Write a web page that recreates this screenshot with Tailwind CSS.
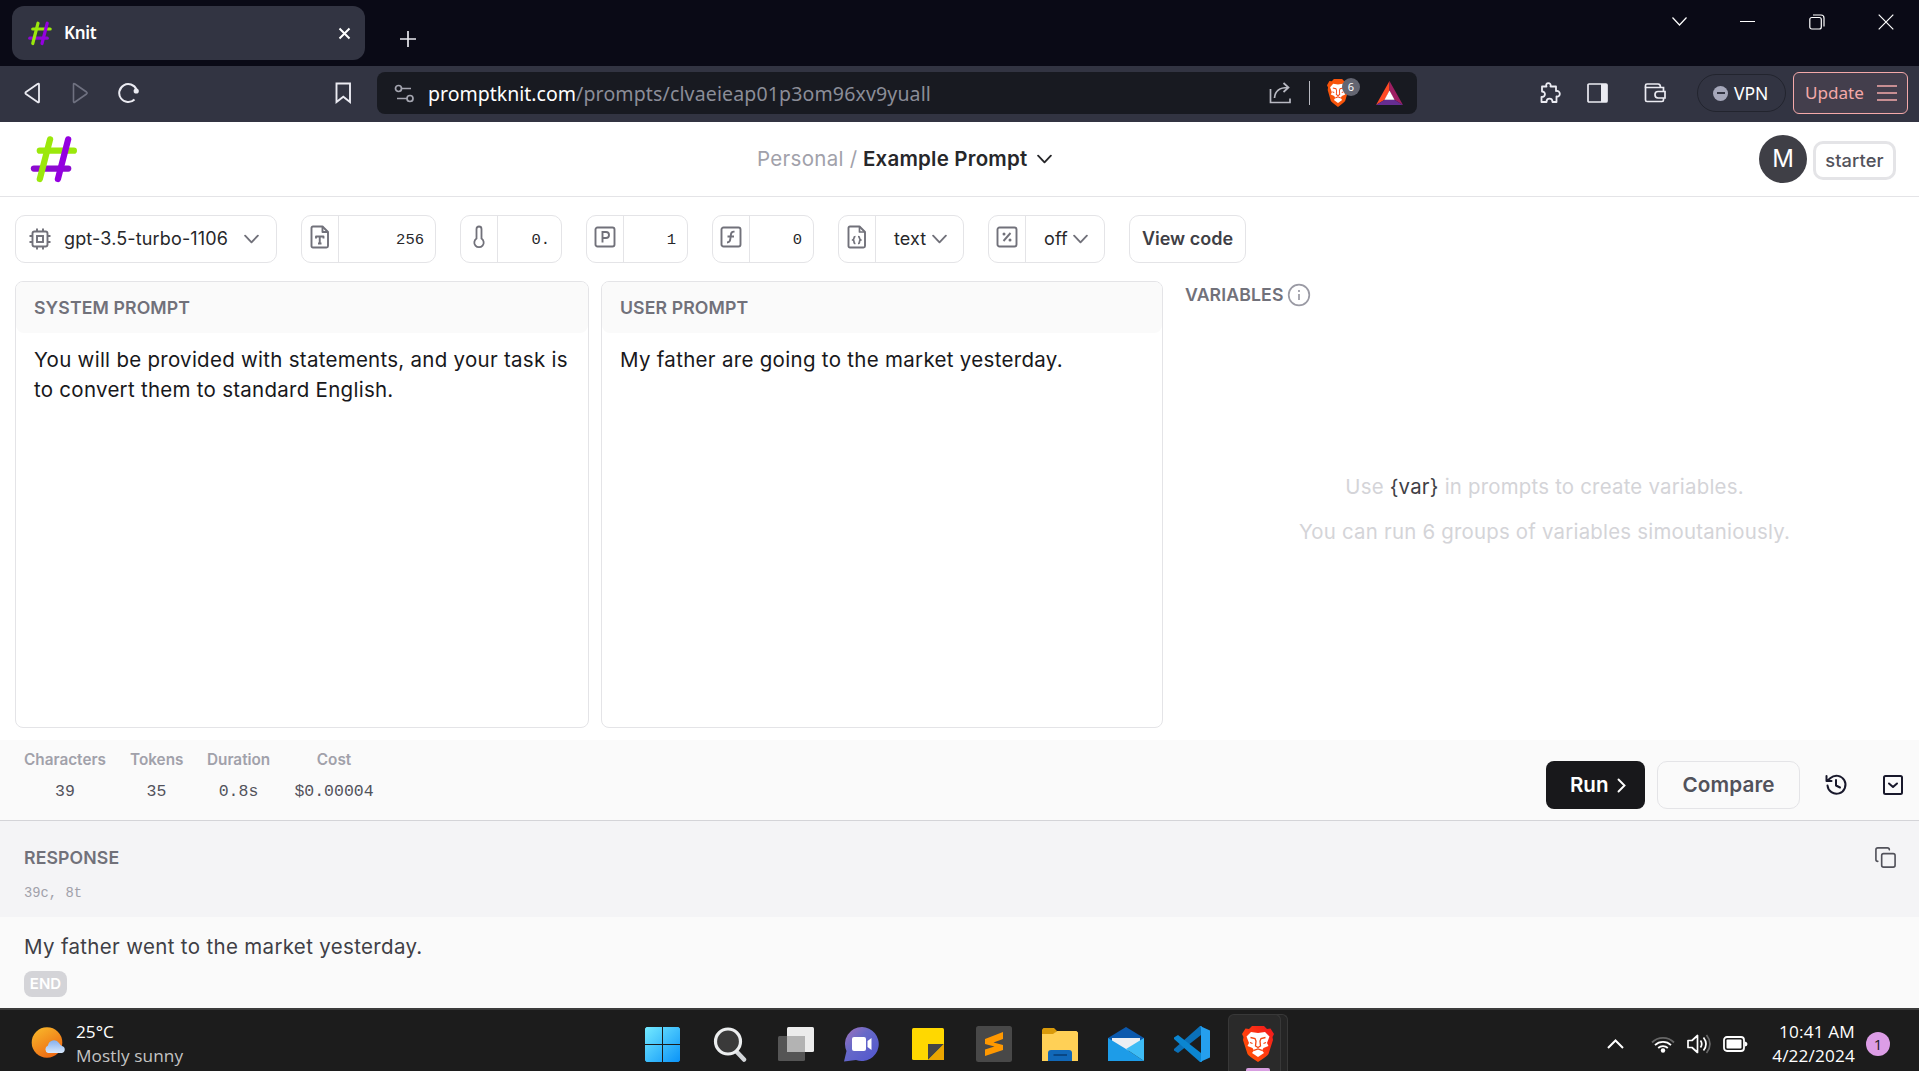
<!DOCTYPE html>
<html lang="en">
<head>
<meta charset="utf-8">
<title>Knit</title>
<script src="https://cdn.jsdelivr.net/npm/@tailwindcss/browser@4"></script>
</head>
<body class="w-[1919px] h-[1071px] overflow-hidden flex flex-col bg-white font-['Inter',sans-serif] text-[20px] text-[#18181b] whitespace-nowrap">
<svg class="hidden">
  <defs>
    <symbol id="knit" viewBox="0 0 48 48">
      <g fill="none" stroke-width="6.4" stroke-linecap="round">
        <path d="M3.500 33.300H38.500" stroke="#8c0bd0"/><path d="M9.500 15H44.300" stroke="#9be80c"/>
        <path d="M20 3.400L9.500 44" stroke="#9be80c"/><path d="M38.500 3.400L28 44" stroke="#9400e0"/>
      </g>
    </symbol>
    <symbol id="lion" viewBox="0 0 32 36">
      <path d="M10 0H22L25 3L28.500 2.500L32 8L30.500 11L31 14L26.500 28Q25.500 30 16 36Q6.500 30 5.500 28L1 14L1.500 11L0 8L3.500 2.500L7 3Z"/>
      <path fill="#fff" d="M16 7L23 6L27.500 10.500L25 17L26.500 20L21.500 22L20 24.500L22 27L16 31L10 27L12 24.500L10.500 22L5.500 20L7 17L4.500 10.500L9 6Z"/>
      <path class="stroke-[#f4440f]" stroke-width="1.300" fill="none" d="M8.500 11.500L13 12.500L14 15L13.500 20L16 21.500L18.500 20L18 15L19 12.500L23.500 11.500M12 24.300L16 23L20 24.300M8 16.500L10.500 17.500M24 16.500L21.500 17.500"/>
    </symbol>
    <symbol id="down" viewBox="0 0 16 10"><path d="M1.200 1.500L8 8.500L14.800 1.500" fill="none" stroke="currentColor" stroke-width="2" stroke-linecap="round" stroke-linejoin="round"/></symbol>
  </defs>
</svg>

<!-- Browser tab strip -->
<header class="h-[66px] shrink-0 bg-[#0a0a16] flex items-start font-['Noto_Sans',sans-serif]">
  <div class="ml-[12px] mt-[6px] w-[353px] h-[54px] rounded-[12px] bg-[#323442] flex items-center pl-4 pr-[14px]">
    <svg class="w-[24px] h-[25px]"><use href="#knit"/></svg>
    <span class="ml-[12px] text-[17px] leading-6 font-semibold text-white tracking-[-0.3px]">Knit</span>
    <svg class="ml-auto w-[13px] h-[13px]" viewBox="0 0 13 13"><path d="M1.500 1.500L11.500 11.500M11.500 1.500L1.500 11.500" stroke="#fff" stroke-width="2"/></svg>
  </div>
  <svg class="ml-[35px] mt-[31px] w-4 h-4" viewBox="0 0 16 16"><path d="M8 0V16M0 8H16" stroke="#e8e8ee" stroke-width="1.700"/></svg>
  <div class="ml-auto mr-[25px] mt-[13px] flex items-center text-white h-[17px]">
    <svg class="w-[15px] h-[9px] mr-[53px]" viewBox="0 0 15 9"><path d="M.5 .5L7.500 8L14.500 .5" fill="none" stroke="currentColor" stroke-width="1.200"/></svg>
    <span class="w-[15px] h-[1px] bg-white mr-[54px]"></span>
    <svg class="w-4 h-4 mr-[53px]" viewBox="0 0 16 16"><g fill="none" stroke="currentColor" stroke-width="1.200"><rect x=".8" y="3.500" width="11.500" height="11.500" rx="2"/><path d="M4 1H12Q15 1 15 4V12.500"/></g></svg>
    <svg class="w-4 h-4" viewBox="0 0 16 16"><path d="M.7 .7L15.300 15.300M15.300 .7L.7 15.300" stroke="currentColor" stroke-width="1.200"/></svg>
  </div>
</header>

<!-- Browser toolbar -->
<nav class="h-[56px] shrink-0 bg-[#323442] flex items-center pb-[2px] font-['Noto_Sans',sans-serif] text-[#ebebf2]">
  <svg class="ml-[24px] w-[17px] h-[22px]" viewBox="0 0 17 22"><path d="M15 2.500V19.500Q15 21 13.500 20L2 12Q.8 11 2 10L13.500 2Q15 1 15 2.500Z" fill="none" stroke="currentColor" stroke-width="1.800"/></svg>
  <svg class="ml-[31px] w-[17px] h-[22px]" viewBox="0 0 17 22"><path d="M1.500 2.500V19.500Q1.500 21 3 20L14.500 12Q15.700 11 14.500 10L3 2Q1.500 1 1.500 2.500Z" fill="none" stroke="#6f7180" stroke-width="1.600"/></svg>
  <svg class="ml-[29px] w-[22px] h-[22px]" viewBox="0 0 22 22"><path d="M16.500 17.500A9 9 0 1 1 18.500 7.500" fill="none" stroke="currentColor" stroke-width="2"/><circle cx="18.200" cy="9" r="2.600" fill="currentColor"/></svg>
  <svg class="ml-[195px] w-[17px] h-[22px]" viewBox="0 0 17 22"><path d="M1.500 1.500H15V20L8.300 14.800L1.500 20Z" fill="none" stroke="currentColor" stroke-width="1.900"/></svg>
  <div class="ml-[25px] w-[1040px] h-[42px] rounded-[8px] bg-[#181a21] flex items-center">
    <svg class="ml-[17px] w-[21px] h-[19px]" viewBox="0 0 21 19"><g fill="none" stroke="#a4a5b0" stroke-width="1.700"><circle cx="4.500" cy="4.500" r="3"/><path d="M7.500 4.500H17M3 14.500H13"/><circle cx="16" cy="14.500" r="3"/></g></svg>
    <span class="ml-[13px] mt-[1px] text-[#8b8d98] text-[19.500px] leading-7 tracking-[0.150px]"><span class="text-white tracking-[0.010px]">promptknit.com</span>/prompts/clvaeieap01p3om96xv9yuall</span>
    <svg class="ml-auto w-[22px] h-[22px]" viewBox="0 0 22 22"><g fill="none" stroke="#b8b9c2" stroke-width="1.700"><path d="M1.500 7V20.500H21V16.500"/><path d="M5.500 16C6 9 10 5.500 19 5.500M14.500 1L19.500 5.500L14.500 10"/></g></svg>
    <span class="ml-[18px] w-[1px] h-6 bg-[#b9bac2]"></span>
    <div class="relative ml-[17px] w-[33px] h-[28px]">
      <svg class="w-[22px] h-[28px] fill-[#f7540b]" viewBox="0 0 32 36" preserveAspectRatio="none"><use href="#lion" width="32" height="36"/></svg>
      <span class="absolute left-[15px] -top-[1px] w-[18px] h-[18px] rounded-full bg-[#636571] text-white text-[11px] leading-[18px] text-center">6</span>
    </div>
    <svg class="ml-[16px] mr-[14px] w-[27px] h-[24px]" viewBox="0 0 27 24"><path d="M13.500 0L0 24L9 18.500L13.500 10Z" fill="#ff4a24"/><path d="M13.500 0L27 24L18 18.500L13.500 10Z" fill="#9e1f63"/><path d="M0 24H27L18 18.500H9Z" fill="#662d91"/><path d="M13.500 9.500L8.500 18.800H18.500Z" fill="#fff"/></svg>
  </div>
  <svg class="ml-[122px] w-[22px] h-[22px]" viewBox="0 0 22 22"><path d="M3 4.500H7.500C5.500 0 13 0 11.500 4.500H17V9C22 8 22 15.500 17.500 14.500V20H13.500C13.500 15.500 7.500 15.500 7.500 20H2.500V15C7 15 7 9.500 3 9.500Z" fill="none" stroke="currentColor" stroke-width="1.800" stroke-linejoin="round"/></svg>
  <svg class="ml-[26px] w-[21px] h-[20px]" viewBox="0 0 21 20"><rect x="1" y="1" width="19" height="18" rx="1" fill="none" stroke="currentColor" stroke-width="1.700"/><path d="M14 1H20V19H14Z" fill="currentColor"/></svg>
  <svg class="ml-[36px] w-[22px] h-[20px]" viewBox="0 0 22 20"><g fill="none" stroke="currentColor" stroke-width="1.700"><path d="M19.500 8V4.500H1.500V17Q1.500 18.500 3 18.500H18Q19.500 18.500 19.500 17V15"/><path d="M1.500 4.500V2.500Q1.500 1 3 1H14Q16.500 1 16.500 4.500"/><path d="M21 8.500H14Q11 8.500 11 11.700T14 15H21Z"/></g></svg>
  <div class="ml-[31px] w-[89px] h-[38px] rounded-full border border-[#22242e] flex items-center pl-[15px]">
    <span class="w-[15px] h-[15px] rounded-full bg-[#a5a7ba] flex items-center justify-center"><span class="w-[8px] h-[2px] bg-[#323442]"></span></span>
    <span class="ml-[6px] text-[17.500px] leading-6 text-white tracking-[-0.1px]">VPN</span>
  </div>
  <div class="ml-[7px] w-[115px] h-[42px] rounded-[6px] border-[1.500px] border-[#f4a9a9] bg-[#433e4c] flex items-center pl-[11px] text-[#f4a9a9]">
    <span class="text-[17.100px] leading-6">Update</span>
    <svg class="ml-auto mr-[10px] w-5 h-4" viewBox="0 0 20 16"><path d="M0 1H20M0 8H20M0 15H20" stroke="currentColor" stroke-width="1.700"/></svg>
  </div>
</nav>

<!-- App header -->
<div class="h-[75px] shrink-0 border-b border-[#e4e4e7] flex items-center">
  <svg class="ml-[30px] w-[48px] h-[47px]"><use href="#knit"/></svg>
  <div class="ml-[679px] flex items-center leading-7">
    <span class="w-[106px] text-[#a1a1aa] text-[20.500px] tracking-[0.300px]">Personal /</span>
    <span class="w-[174px] text-[20.500px] font-semibold tracking-[0.200px] text-[#27272a]">Example Prompt</span>
    <svg class="w-[15px] h-[10px] text-[#27272a]"><use href="#down"/></svg>
  </div>
  <div class="ml-auto mr-[23px] flex items-center">
    <span class="w-[48px] h-[48px] rounded-full bg-[#3f3f46] text-white text-[24px] leading-[47px] text-center">M</span>
    <span class="ml-[6px] mt-[3px] w-[83px] h-[39px] rounded-[10px] border-[3px] border-[#e4e4e7] text-[#52525b] font-medium text-[18.300px] leading-[32px] text-center tracking-[0.1px]">starter</span>
  </div>
</div>

<!-- Model settings -->
<div class="mt-[18px] ml-[15px] h-[48px] shrink-0 flex gap-[24px] text-[#71717a]">
  <div class="w-[262px] rounded-[10px] border border-[#e4e4e7] flex items-center">
    <svg class="ml-[12px] w-6 h-6" viewBox="0 0 24 24"><g fill="none" stroke="currentColor" stroke-width="1.900"><rect x="4.500" y="4.500" width="15" height="15" rx="2"/><rect x="9" y="9" width="6" height="6"/><path d="M9 4.500V1.500M15 4.500V1.500M9 22.500V19.500M15 22.500V19.500M4.500 9H1.500M4.500 15H1.500M22.500 9H19.500M22.500 15H19.500"/></g></svg>
    <span class="ml-[12px] w-[165px] text-[#27272a] text-[18px] leading-[26px] -mt-[1px] tracking-[0.150px]">gpt-3.5-turbo-1106</span>
    <svg class="ml-[15px] w-[15px] h-[10px]"><use href="#down"/></svg>
  </div>
  <div class="w-[135px] rounded-[10px] border border-[#e4e4e7] flex">
    <div class="w-[37px] border-r border-[#e4e4e7] flex justify-center pt-[9px]">
      <svg class="w-[20px] h-[24px]" viewBox="0 0 20 24"><g fill="none" stroke="currentColor" stroke-width="1.900" stroke-linejoin="round"><path d="M3 1.500H12.500L18 7V21Q18 22.500 16.500 22.500H3Q1.500 22.500 1.500 21V3Q1.500 1.500 3 1.500Z"/><path d="M12.500 1.500V7H18M6 13.500V11.500H13.500V13.500M9.750 11.500V18.500M8 18.500H11.500"/></g></svg>
    </div>
    <span class="flex-1 pr-[11px] text-right font-['Liberation_Mono',monospace] text-[15.500px] leading-[49px] text-[#27272a]">256</span>
  </div>
  <div class="w-[102px] rounded-[10px] border border-[#e4e4e7] flex">
    <div class="w-[37px] border-r border-[#e4e4e7] flex justify-center pt-[9px]">
      <svg class="w-[14px] h-[24px]" viewBox="0 0 14 24"><path d="M4.500 13.500V4Q4.500 1.500 7 1.500T9.500 4V13.500A4.700 4.700 0 1 1 4.500 13.500Z" fill="none" stroke="currentColor" stroke-width="1.800"/></svg>
    </div>
    <span class="flex-1 pr-[11px] text-right font-['Liberation_Mono',monospace] text-[15.500px] leading-[49px] text-[#27272a]">0.</span>
  </div>
  <div class="w-[102px] rounded-[10px] border border-[#e4e4e7] flex">
    <div class="w-[37px] border-r border-[#e4e4e7] flex justify-center pt-[10px]">
      <svg class="w-[22px] h-[22px]" viewBox="0 0 22 22"><g fill="none" stroke="currentColor" stroke-width="1.900"><rect x="1.500" y="1.500" width="19" height="19" rx="2"/><path d="M8.500 16.500V6H12Q15 6 15 9T12 12H8.500"/></g></svg>
    </div>
    <span class="flex-1 pr-[11px] text-right font-['Liberation_Mono',monospace] text-[15.500px] leading-[49px] text-[#27272a]">1</span>
  </div>
  <div class="w-[102px] rounded-[10px] border border-[#e4e4e7] flex">
    <div class="w-[37px] border-r border-[#e4e4e7] flex justify-center pt-[10px]">
      <svg class="w-[22px] h-[22px]" viewBox="0 0 22 22"><g fill="none" stroke="currentColor" stroke-width="1.900"><rect x="1.500" y="1.500" width="19" height="19" rx="2"/><path d="M7 16.500Q10 16.500 10.300 13L11 8Q11.500 5.300 14.500 5.700M7.500 10.500H14"/></g></svg>
    </div>
    <span class="flex-1 pr-[11px] text-right font-['Liberation_Mono',monospace] text-[15.500px] leading-[49px] text-[#27272a]">0</span>
  </div>
  <div class="w-[126px] rounded-[10px] border border-[#e4e4e7] flex">
    <div class="w-[37px] border-r border-[#e4e4e7] flex justify-center pt-[9px]">
      <svg class="w-[20px] h-[24px]" viewBox="0 0 20 24"><g fill="none" stroke="currentColor" stroke-width="1.900" stroke-linejoin="round"><path d="M3 1.500H12.500L18 7V21Q18 22.500 16.500 22.500H3Q1.500 22.500 1.500 21V3Q1.500 1.500 3 1.500Z"/><path stroke-width="1.700" d="M12.500 1.500V7H18M8.500 11.500Q7 11.500 7 13T5.500 15Q7 15 7 16.800T8.500 18.500M11 11.500Q12.500 11.500 12.500 13T14 15Q12.500 15 12.500 16.800T11 18.500"/></g></svg>
    </div>
    <span class="ml-[18px] w-[38px] text-[18px] tracking-[0.1px] leading-[46px] text-[#27272a]">text</span>
    <svg class="mt-[18px] w-[15px] h-[10px]"><use href="#down"/></svg>
  </div>
  <div class="w-[117px] rounded-[10px] border border-[#e4e4e7] flex">
    <div class="w-[37px] border-r border-[#e4e4e7] flex justify-center pt-[10px]">
      <svg class="w-[22px] h-[22px]" viewBox="0 0 22 22"><g fill="none" stroke="currentColor" stroke-width="1.900"><rect x="1.500" y="1.500" width="19" height="19" rx="2"/><path d="M7.500 15L14.500 7"/></g><circle cx="8" cy="8" r="1.500" fill="currentColor"/><circle cx="14" cy="14" r="1.500" fill="currentColor"/></svg>
    </div>
    <span class="ml-[18px] w-[29px] text-[18px] tracking-[0.1px] leading-[46px] text-[#27272a]">off</span>
    <svg class="mt-[18px] w-[15px] h-[10px]"><use href="#down"/></svg>
  </div>
  <div class="w-[117px] rounded-[10px] border border-[#e4e4e7] text-center text-[18px] leading-[46px] font-semibold text-[#3f3f46]">View code</div>
</div>

<!-- Prompts and variables -->
<main class="h-[477px] shrink-0 pt-[18px] pl-[15px] flex">
  <section class="w-[574px] h-[447px] rounded-[8px] border border-[#e4e4e7] overflow-hidden">
    <h2 class="h-[51px] bg-[#fafafa] rounded-b-[8px] pl-[18px] text-[17.700px] tracking-[0.1px] leading-[51px] font-semibold text-[#71717a]">SYSTEM PROMPT</h2>
    <p class="pt-[12px] pl-[18px] text-[20.500px] leading-[30px] tracking-[0.270px]">You will be provided with statements, and your task is<br>to convert them to standard English.</p>
  </section>
  <section class="ml-[12px] w-[562px] h-[447px] rounded-[8px] border border-[#e4e4e7] overflow-hidden">
    <h2 class="h-[51px] bg-[#fafafa] rounded-b-[8px] pl-[18px] text-[17.700px] tracking-[0.1px] leading-[51px] font-semibold text-[#71717a]">USER PROMPT</h2>
    <p class="pt-[12px] pl-[18px] text-[20.500px] leading-[30px] tracking-[0.300px]">My father are going to the market yesterday.</p>
  </section>
  <section class="ml-[22px] w-[719px]">
    <h2 class="h-[28px] flex items-center text-[17.700px] tracking-[0.1px] font-semibold text-[#71717a]"><span class="w-[102px]">VARIABLES</span>
      <svg class="w-6 h-6" viewBox="0 0 24 24"><g fill="none" stroke="#9a9aa4" stroke-width="1.700"><circle cx="12" cy="12" r="10.300"/><path d="M12 11V17M12 7V9"/></g></svg></h2>
    <div class="mt-[155px] text-center text-[20.400px] tracking-[0.220px] leading-[45px] text-[#d4d4d8]">
      <p>Use <span class="text-[#3f3f46]">{var}</span> in prompts to create variables.</p>
      <p>You can run 6 groups of variables simoutaniously.</p>
    </div>
  </section>
</main>

<!-- Run statistics and actions -->
<div class="h-[81px] shrink-0 bg-[#fafafa] border-b border-[#d4d4d8] flex">
  <div class="ml-[24px] pt-[8px] flex gap-[24px] text-center text-[15.300px] leading-6 font-semibold text-[#a1a1aa]">
    <div class="w-[82px]">Characters<p class="mt-[8px] font-normal text-[16.500px] text-[#52525b] font-['Liberation_Mono',monospace]">39</p></div>
    <div class="w-[53px]">Tokens<p class="mt-[8px] font-normal text-[16.500px] text-[#52525b] font-['Liberation_Mono',monospace]">35</p></div>
    <div class="w-[63px]">Duration<p class="mt-[8px] font-normal text-[16.500px] text-[#52525b] font-['Liberation_Mono',monospace]">0.8s</p></div>
    <div class="w-[80px]">Cost<p class="mt-[8px] font-normal text-[16.500px] text-[#52525b] font-['Liberation_Mono',monospace]">$0.00004</p></div>
  </div>
  <div class="ml-auto mr-[14px] pt-[21px] h-[69px] flex items-center">
    <div class="w-[99px] h-[48px] rounded-[8px] bg-[#18181b] flex items-center pl-[24px] text-white font-semibold text-[20.500px]"><span class="w-[47px]">Run</span>
      <svg class="w-[9px] h-[15px]" viewBox="0 0 9 15"><path d="M1.500 1.500L7.500 7.500L1.500 13.500" fill="none" stroke="#fff" stroke-width="1.900" stroke-linecap="round"/></svg></div>
    <div class="ml-[12px] w-[143px] h-[48px] rounded-[10px] border border-[#e4e4e7] text-[#52525b] text-center font-semibold text-[20.700px] tracking-[0.1px] leading-[46px]">Compare</div>
    <svg class="ml-[24px] w-6 h-6 text-[#18182b]" viewBox="0 0 24 24"><g fill="none" stroke="currentColor" stroke-width="2" stroke-linejoin="round" stroke-linecap="round"><path d="M3.500 12.500A9 9 0 1 0 6.500 5L3 8M2.500 3V8H7.500M12 7V12.500L16 14.500"/></g></svg>
    <svg class="ml-[33px] w-6 h-6 text-[#18182b]" viewBox="0 0 24 24"><g fill="none" stroke="currentColor" stroke-width="2" stroke-linejoin="round" stroke-linecap="round"><rect x="3" y="3" width="18" height="18" rx="1.500"/><path d="M8 10.500L12 14L16 10.500"/></g></svg>
  </div>
</div>

<!-- Response -->
<div class="h-[96px] shrink-0 bg-[#f4f4f6] pl-[24px] pr-[22px] flex justify-between">
  <div class="pt-[25px]">
    <h2 class="text-[17.700px] tracking-[0.1px] leading-6 font-semibold text-[#71717a]">RESPONSE</h2>
    <p class="mt-[14px] text-[13.800px] leading-5 text-[#a1a1aa] font-['Liberation_Mono',monospace]">39c, 8t</p>
  </div>
  <svg class="mt-[25px] w-[23px] h-[23px]" viewBox="0 0 24 24"><g fill="none" stroke="#52525b" stroke-width="1.700" stroke-linejoin="round" stroke-linecap="round"><rect x="8" y="8" width="14" height="14" rx="2"/><path d="M4 16Q2 16 2 14V4Q2 2 4 2H14Q16 2 16 4"/></g></svg>
</div>
<div class="h-[91px] shrink-0 bg-[#fafafa] pl-[24px] pt-[15px]">
  <p class="text-[20.500px] leading-[30px] tracking-[0.330px] text-[#3f3f46]">My father went to the market yesterday.</p>
  <span class="mt-[9px] block w-[43px] h-[26px] rounded-[8px] bg-[#d4d4d8] text-white text-[15px] leading-[26px] font-semibold text-center">END</span>
</div>

<!-- Windows taskbar -->
<footer class="h-[63px] shrink-0 bg-[#1c1c1c] border-t-2 border-[#3c3c3c] flex items-start text-white font-['Open_Sans',sans-serif] text-[17.200px] leading-[24px]">
  <svg class="ml-[31px] mt-[16px] w-[36px] h-[34px]" viewBox="0 0 36 34"><defs><linearGradient id="sun" x1="0" y1="0" x2=".6" y2="1"><stop stop-color="#f9bd2c"/><stop offset="1" stop-color="#ee6a13"/></linearGradient><linearGradient id="cl" x1="0" y1="0" x2="0" y2="1"><stop stop-color="#85b0ee"/><stop offset="1" stop-color="#d8e8fc"/></linearGradient></defs><circle cx="16" cy="16.500" r="15.300" fill="url(#sun)"/><path d="M17 27A4 4 0 0 1 17 19.500A6 6 0 0 1 28 17Q30 20 31 20A3.600 3.600 0 0 1 31 27Z" fill="url(#cl)"/></svg>
  <div class="ml-[9px] mt-[10px] w-[130px] leading-[24px]"><p>25°C</p><p class="text-[#c4c4c4] tracking-[0.1px]">Mostly sunny</p></div>
  <div class="ml-[439px] mt-[17px] flex items-start">
    <svg class="w-[35px] h-[35px]" viewBox="0 0 35 35"><defs><linearGradient id="win" gradientUnits="userSpaceOnUse" x1="0" y1="0" x2="35" y2="35"><stop stop-color="#74eaff"/><stop offset="1" stop-color="#0a93f8"/></linearGradient></defs><path fill="url(#win)" d="M1.500 0H17V17H0V1.500ZM18 0H33.500L35 1.500V17H18ZM0 18H17V35H1.500L0 33.500ZM18 18H35V33.500L33.500 35H18Z"/></svg>
    <svg class="ml-[33px] w-[34px] h-[35px]" viewBox="0 0 34 35"><path d="M23 24L31 32.500" stroke="#d3d6d9" stroke-width="4.500" stroke-linecap="round"/><circle cx="15" cy="14.500" r="12.500" fill="#3a3a3a" stroke="#eceeef" stroke-width="3.200"/></svg>
    <svg class="ml-[31px] w-[36px] h-[34px]" viewBox="0 0 36 34"><rect x="9" width="27" height="25" rx="1.500" fill="#ececec"/><rect y="9" width="27" height="25" rx="1.500" fill="#555"/><path d="M9 9H27V25H9Z" fill="#b3b3b3"/></svg>
    <svg class="ml-[30px] w-[35px] h-[35px]" viewBox="0 0 35 35"><defs><linearGradient id="chat" x1="0" y1="0" x2="1" y2="1"><stop stop-color="#a572b9"/><stop offset=".4" stop-color="#6769c8"/><stop offset="1" stop-color="#5055cf"/></linearGradient></defs><path d="M18 0A17 17 0 1 1 12 33L0 34.500L2.500 24A17 17 0 0 1 18 0Z" fill="url(#chat)"/><rect x="8" y="10" width="14" height="14" rx="2" fill="#fff"/><path d="M23.500 14L27.500 11V23L23.500 20Z" fill="#fff"/></svg>
    <svg class="ml-[33px] mt-[1px] w-[32px] h-[32px]" viewBox="0 0 32 32"><rect width="32" height="32" rx="1.500" fill="#ffd800"/><path d="M16 16H32L16 32Z" fill="#454545"/><path d="M32 16V32H16Z" fill="#eba500"/></svg>
    <svg class="ml-[32px] -mt-[1px] w-[36px] h-[36px]" viewBox="0 0 36 36"><rect width="36" height="36" rx="2.500" fill="#484848"/><path d="M9 13L27 6V13L17.500 16.500L27 19V24L9 30V23.500L18.500 20.500L9 18Z" fill="#ff9800"/></svg>
    <svg class="ml-[30px] mt-[1px] w-[36px] h-[33px]" viewBox="0 0 36 33"><path d="M0 1.500L1.500 0H12L15 3L11 7H0Z" fill="#d99a0a"/><path d="M0 6H11L15 3H34.500L36 4.500V33H0Z" fill="#ffd056"/><path d="M6 33V25Q6 22 9 22H27Q30 22 30 25V33Z" fill="#1168b8"/><path d="M11.500 27H25" stroke="#09457f" stroke-width="1.800"/></svg>
    <svg class="ml-[30px] w-[36px] h-[34px]" viewBox="0 0 36 34"><path d="M0 11L18 0L36 11V16H0Z" fill="#0b59ad"/><path d="M4 11H32V16L18 25L4 16Z" fill="#eceff3"/><path d="M0 11V34H36L18 22Z" fill="#1d9ce8"/><path d="M36 11V34L18 22Z" fill="#3ebcf5"/></svg>
    <svg class="ml-[30px] -mt-[1px] w-[36px] h-[36px]" viewBox="0 0 36 36"><path d="M27 9L4 27L0 24.500V23L26 0H28Z" fill="#0a70b8"/><path d="M27 27L4 9L0 11.500V13L26 36H28Z" fill="#0b86d1"/><path d="M26 0L36 4.500V31.500L26 36Q27 35 27 33V3Q27 1 26 0Z" fill="#259fee"/></svg>
    <div class="relative ml-[18px] -mt-[13px] w-[60px] h-[60px]">
      <span class="absolute left-[20px] top-0 w-[40px] h-[60px] rounded-tr-[6px] bg-[#252525] border-t border-r border-[#383838]"></span>
      <span class="absolute left-0 top-0 w-[53px] h-[60px] rounded-t-[6px] bg-[#2a2a2a] border-t border-x border-[#383838]"></span>
      <svg class="absolute left-[14px] top-[12px] w-[32px] h-[36px]" viewBox="0 0 32 36" fill="url(#braveg)"><defs><linearGradient id="braveg" x1="0" y1="1" x2="1" y2="0"><stop offset="0" stop-color="#ff5a00"/><stop offset=".5" stop-color="#ff3a10"/><stop offset="1" stop-color="#f0141e"/></linearGradient></defs><use href="#lion" width="32" height="36"/></svg>
      <span class="absolute left-[18px] top-[54px] w-[24px] h-[8px] rounded-[2px] bg-[#d79ee0]"></span>
    </div>
  </div>
  <div class="ml-auto mr-[29px] mt-[10px] flex items-center">
    <svg class="w-[17px] h-[10px]" viewBox="0 0 17 10"><path d="M1 9L8.500 1.500L16 9" fill="none" stroke="#fff" stroke-width="2"/></svg>
    <svg class="ml-[27px] w-[24px] h-[18px]" viewBox="0 0 24 18"><g fill="none" stroke="#fff" stroke-width="1.800"><path d="M1 7.500A15.500 15.500 0 0 1 23 7.500" stroke="#666"/><path d="M4 10.200A11.500 11.500 0 0 1 20 10.200M7.200 13A7 7 0 0 1 16.800 13"/></g><circle cx="12" cy="15.500" r="2.200" fill="#fff"/></svg>
    <svg class="ml-[12px] w-[25px] h-[20px]" viewBox="0 0 25 20"><g fill="none" stroke="#fff" stroke-width="1.700" stroke-linejoin="round"><path d="M1 6.500H5L10.500 1.500V18.500L5 13.500H1Z"/><path d="M13.500 6.500Q16 10 13.500 13.500M16.500 3.500Q21.500 10 16.500 16.500"/><path d="M19.500 1Q26.500 10 19.500 19" stroke="#666"/></g></svg>
    <svg class="ml-[11px] w-[25px] h-[16px]" viewBox="0 0 25 16"><rect x="1" y="1" width="20" height="14" rx="3" fill="none" stroke="#fff" stroke-width="1.800"/><rect x="3.500" y="3.500" width="15" height="9" rx="1" fill="#fff"/><path d="M22 5.500Q24.500 6 24.500 8T22 10.500Z" fill="#fff"/></svg>
    <div class="ml-[14px] w-[93px] text-right leading-[24px] tracking-[0.160px]"><p>10:41 AM</p><p>4/22/2024</p></div>
    <span class="ml-[11px] w-6 h-6 rounded-full bg-[#dc9de6] text-[#1c1c1c] text-[15px] leading-6 text-center">1</span>
  </div>
</footer>
</body>
</html>
